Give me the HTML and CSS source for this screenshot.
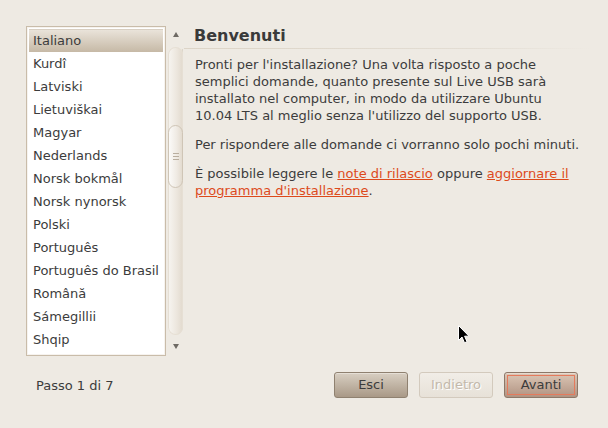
FILE: index.html
```html
<!DOCTYPE html>
<html lang="it">
<head>
<meta charset="utf-8">
<link rel="stylesheet" href="styles.css">
</head>
<body>
<div class="window">
  <div class="top">
    <div class="listwrap">
      <div class="list">
        <div class="items">
          <div class="row selected">Italiano</div>
          <div class="row">Kurdî</div>
          <div class="row">Latviski</div>
          <div class="row">Lietuviškai</div>
          <div class="row">Magyar</div>
          <div class="row">Nederlands</div>
          <div class="row">Norsk bokmål</div>
          <div class="row">Norsk nynorsk</div>
          <div class="row">Polski</div>
          <div class="row">Português</div>
          <div class="row">Português do Brasil</div>
          <div class="row">Română</div>
          <div class="row">Sámegillii</div>
          <div class="row">Shqip</div>
        </div>
      </div>
      <div class="scrollbar">
        <div class="arrow-box"><span class="arrow up"></span></div>
        <div class="trough">
          <div class="thumb"><span class="grip"></span><span class="grip"></span><span class="grip"></span></div>
        </div>
        <div class="arrow-box"><span class="arrow down"></span></div>
      </div>
    </div>
    <div class="panel">
      <h1 class="title">Benvenuti</h1>
      <div class="sep"></div>
      <div class="content">
        <p>Pronti per l'installazione? Una volta risposto a poche semplici domande, quanto presente sul Live USB sarà installato nel computer, in modo da utilizzare Ubuntu 10.04 LTS al meglio senza l'utilizzo del supporto USB.</p>
        <p>Per rispondere alle domande ci vorranno solo pochi minuti.</p>
        <p>È possibile leggere le <a class="link" href="#">note di rilascio</a> oppure <a class="link" href="#">aggiornare il programma d'installazione</a>.</p>
      </div>
    </div>
  </div>
  <div class="bottom">
    <div class="step">Passo 1 di 7</div>
    <div class="buttons">
      <button class="btn">Esci</button>
      <button class="btn disabled">Indietro</button>
      <button class="btn primary">Avanti</button>
    </div>
  </div>
  <svg class="cursor" width="13" height="21" viewBox="0 0 13 21">
    <path d="M1.5 1.5 L1.5 16.5 L5 13 L7.5 18.8 L10 17.7 L7.6 12.2 L12 12.2 Z" fill="#000" stroke="#fff" stroke-width="1" stroke-linejoin="miter"/>
  </svg>
</div>
</body>
</html>
```

FILE: styles.css
```css
html, body {
  margin: 0;
  padding: 0;
}
body {
  width: 608px;
  height: 428px;
  background: #eeeae3;
  font-family: "DejaVu Sans", "Liberation Sans", sans-serif;
  font-size: 13px;
  color: #3c3c3c;
  overflow: hidden;
}
.window {
  position: relative;
  box-sizing: border-box;
  height: 428px;
  padding: 26px 0 0 26px;
  display: flex;
  flex-direction: column;
}
.top {
  display: flex;
}
.listwrap {
  display: flex;
}
.list {
  box-sizing: border-box;
  width: 140px;
  height: 330px;
  border: 1px solid #c9bca9;
  background: #f6f3ef;
  padding: 1px;
}
.items {
  background: #fff;
  height: 100%;
  box-sizing: border-box;
  padding: 1px;
  overflow: hidden;
}
.row {
  height: 23px;
  line-height: 23px;
  padding-left: 4px;
  white-space: nowrap;
  color: #3c3c3c;
}
.row.selected {
  background: linear-gradient(#ebe5dc, #c6b9a6);
  box-shadow: inset 0 1px 0 #d8cfc2;
}
.scrollbar {
  width: 16px;
  margin-left: 1px;
  height: 330px;
  display: flex;
  flex-direction: column;
}
.arrow-box {
  height: 21px;
  display: flex;
  align-items: center;
  justify-content: center;
}
.arrow {
  width: 0;
  height: 0;
  border-left: 3px solid transparent;
  border-right: 3px solid transparent;
  margin-left: 1px;
}
.arrow.up {
  border-bottom: 5px solid #6e6a64;
  margin-top: -5px;
}
.arrow.down {
  border-top: 5px solid #6e6a64;
  margin-top: 2px;
}
.trough {
  position: relative;
  flex: 1;
  margin-left: 1px;
  width: 15px;
  border-radius: 8px;
  background: linear-gradient(90deg, #f7f5f1, #ece6dd 60%, #e1d9cd);
  box-shadow: inset 0 0 0 1px #e6dfd4;
}
.thumb {
  position: absolute;
  left: 0;
  top: 78px;
  width: 15px;
  height: 63px;
  box-sizing: border-box;
  border: 1px solid #cfc5b6;
  border-radius: 8px;
  background: linear-gradient(90deg, #fbfaf8, #efeae3 60%, #e3dbcf);
  display: flex;
  flex-direction: column;
  align-items: center;
  justify-content: center;
  gap: 2px;
}
.grip {
  display: block;
  width: 6px;
  height: 1px;
  background: #b9ae9f;
}
.panel {
  width: 408px;
  margin-left: 1px;
}
.title {
  margin: 0;
  padding-left: 10px;
  font-size: 16px;
  font-weight: bold;
  line-height: 20px;
  color: #3a3a3a;
}
.sep {
  height: 1px;
  margin-top: 2px;
  background: linear-gradient(90deg, #dcd4c7, #e3ddd3 70%, rgba(238, 234, 227, 0));
}
.content {
  padding: 7px 0 0 12px;
  width: 386px;
  border-left: 1px solid;
  border-image: linear-gradient(#dcd5ca, #e6e0d7 70%, rgba(238, 234, 227, 0)) 1;
  margin-left: -2px;
}
.content p {
  margin: 0 0 12px;
  line-height: 17px;
}
.link {
  color: #dd4a1c;
  text-decoration: underline;
}
.bottom {
  display: flex;
  align-items: center;
  margin-top: 16px;
}
.step {
  padding-left: 10px;
  line-height: 17px;
  width: 298px;
}
.buttons {
  display: flex;
  gap: 11px;
}
.btn {
  box-sizing: border-box;
  width: 74px;
  height: 26px;
  border: 1px solid #8f8170;
  border-radius: 3px;
  background: linear-gradient(#d8cfc2, #a99987);
  font-family: "DejaVu Sans", "Liberation Sans", sans-serif;
  font-size: 13px;
  line-height: 24px;
  color: #3c3c3c;
  padding: 0;
  text-align: center;
  box-shadow: inset 0 1px 0 rgba(255, 255, 255, 0.35);
}
.btn.disabled {
  border-color: #d3cabd;
  background: linear-gradient(#f1ede7, #e7e1d8);
  color: #c3b9ab;
  text-shadow: 1px 1px 0 #fff;
  box-shadow: none;
}
.btn.primary {
  background: linear-gradient(#dcc7b6, #b19382);
  border-color: #8c7868;
  outline: 1px solid #e57a5c;
  outline-offset: -4px;
}
.cursor {
  position: absolute;
  left: 457px;
  top: 324px;
}
```
